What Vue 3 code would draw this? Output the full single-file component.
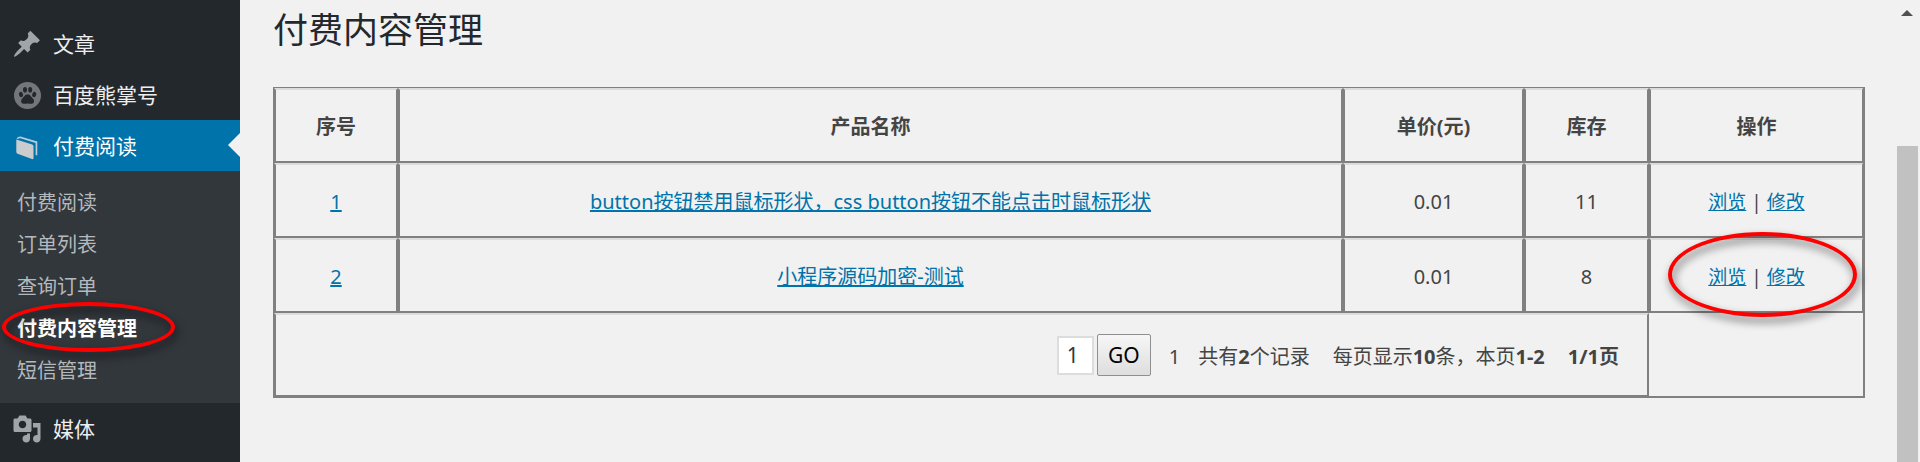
<script setup>
import { ref } from 'vue'

const submenu = ['付费阅读', '订单列表', '查询订单', '付费内容管理', '短信管理']
const currentSub = '付费内容管理'

const products = [
  { id: 1, name: 'button按钮禁用鼠标形状，css button按钮不能点击时鼠标形状', price: '0.01', stock: 11 },
  { id: 2, name: '小程序源码加密-测试', price: '0.01', stock: 8, marked: true },
]

const page = ref('1')
</script>

<template>
  <div class="layout" lang="zh-CN">
    <nav class="sidebar">
      <a class="item" href="#">
        <svg class="icon" viewBox="0 0 20 20"><path d="M10.44 3.02l1.82-1.82 6.36 6.35-1.83 1.82c-1.05-.68-2.48-.57-3.41.36l-.75.75c-.92.93-1.04 2.35-.35 3.41l-1.83 1.82-2.41-2.41-2.8 2.79c-.42.42-3.38 2.71-3.8 2.29s1.86-3.39 2.28-3.81l2.79-2.79L4.1 9.36l1.83-1.82c1.05.69 2.48.57 3.4-.36l.75-.75c.93-.92 1.05-2.35.36-3.41z" /></svg>
        <span>文章</span>
      </a>
      <a class="item" href="#">
        <svg class="icon" viewBox="0 0 30 30">
          <circle cx="15.5" cy="15.5" r="13.5" fill="#74777a" />
          <g fill="#23282d">
            <ellipse cx="9" cy="14.5" rx="2" ry="2.7" transform="rotate(-20 9 14.5)" />
            <ellipse cx="13" cy="9.7" rx="2" ry="2.8" />
            <ellipse cx="18.2" cy="9.7" rx="2" ry="2.8" />
            <ellipse cx="22.2" cy="14.5" rx="2" ry="2.7" transform="rotate(20 22.2 14.5)" />
            <path d="M15.6 14.2c2.4 0 3.2 2.3 4.8 3.8 1.9 1.8 2.1 3.3 1.2 4.7-1.3 1.8-3.7.7-6 .7s-4.7 1.1-6-.7c-.9-1.4-.7-2.9 1.2-4.7 1.6-1.5 2.4-3.8 4.8-3.8z" />
          </g>
        </svg>
        <span>百度熊掌号</span>
      </a>
      <a class="item active" href="#">
        <svg class="icon" viewBox="0 0 30 30">
          <path d="M4.3 8.5L20.2 13.6Q21.5 14 21.5 15.4V27Q21.500 28.6 20 28.1L5.5 22.8Q4.4 22.3 4.3 21Z" fill="#cbcccd" />
          <path d="M4.6 7.8Q5.5 5.5 8.5 5.5L25.3 10.5V24.5L23.6 24V12L8.3 7.2Q6.5 7 5.5 8.2Z" fill="#b9cbd6" />
        </svg>
        <span>付费阅读</span>
      </a>
      <ul class="submenu">
        <li v-for="name in submenu" :key="name">
          <a href="#" :class="{ current: name === currentSub }">{{ name }}</a>
          <i v-if="name === currentSub" class="ring ring-menu"></i>
        </li>
      </ul>
      <a class="item" href="#">
        <svg class="icon" viewBox="0 0 20 20"><path d="M13 11V4c0-.55-.45-1-1-1h-1.67L9 1H5L3.67 3H2c-.55 0-1 .45-1 1v7c0 .55.45 1 1 1h10c.55 0 1-.45 1-1zM7 4.5c1.38 0 2.5 1.12 2.5 2.5S8.38 9.5 7 9.5 4.5 8.38 4.5 7 5.62 4.5 7 4.5zM14 6h5v10.5c0 1.38-1.12 2.5-2.5 2.5S14 17.88 14 16.5s1.12-2.5 2.5-2.5c.17 0 .34.02.5.05V9h-3V6zm-4 8.05V13h2v3.5c0 1.38-1.12 2.5-2.5 2.5S7 17.88 7 16.5 8.12 14 9.5 14c.17 0 .34.02.5.05z" /></svg>
        <span>媒体</span>
      </a>
    </nav>

    <main class="content">
      <h1>付费内容管理</h1>
      <table>
        <colgroup>
          <col class="c-id" />
          <col />
          <col class="c-price" />
          <col class="c-stock" />
          <col class="c-ops" />
        </colgroup>
        <thead>
          <tr>
            <th>序号</th>
            <th>产品名称</th>
            <th>单价(元)</th>
            <th>库存</th>
            <th class="last">操作</th>
          </tr>
        </thead>
        <tbody>
          <tr v-for="p in products" :key="p.id">
            <td><a href="#">{{ p.id }}</a></td>
            <td><a href="#">{{ p.name }}</a></td>
            <td>{{ p.price }}</td>
            <td>{{ p.stock }}</td>
            <td class="ops last">
              <a href="#">浏览</a> | <a href="#">修改</a>
              <i v-if="p.marked" class="ring ring-ops"></i>
            </td>
          </tr>
        </tbody>
        <tfoot>
          <tr>
            <td colspan="4">
              <form class="pager" @submit.prevent>
                <input v-model="page" type="text" aria-label="页码" />
                <button type="submit">GO</button>
                <span class="num">1</span>
                <span class="total">共有<b>2</b>个记录</span>
                <span class="range">每页显示<b>10</b>条，本页<b>1-2</b></span>
                <span><b>1/1页</b></span>
              </form>
            </td>
          </tr>
        </tfoot>
      </table>
    </main>

    <div class="scrollbar">
      <svg class="up" viewBox="0 0 12 6"><path d="M6 0L12 6H0Z" /></svg>
      <div class="thumb"></div>
    </div>
  </div>
</template>

<style>
body {
  margin: 0;
  background: #f1f1f1;
}
</style>

<style scoped>
.layout {
  display: flex;
  height: 100vh;
  overflow: hidden;
  font-family: "Noto Sans", "Noto Sans CJK SC", sans-serif;
  font-size: 20px;
  color: #444;
}

.sidebar {
  flex: none;
  box-sizing: border-box;
  width: 240px;
  padding-top: 18px;
  background: #23282d;
}

.item {
  position: relative;
  display: flex;
  align-items: center;
  gap: 11px;
  height: 51px;
  padding-left: 12px;
  color: #eee;
  font-size: 21px;
  line-height: 28px;
  text-decoration: none;
}

.icon {
  width: 30px;
  height: 30px;
  fill: #a0a5aa;
}

.item.active {
  background: #0073aa;
  color: #fff;
}

.item.active::after {
  content: "";
  position: absolute;
  right: 0;
  top: 13px;
  border: 12px solid transparent;
  border-left-width: 0;
  border-right-color: #f1f1f1;
}

.submenu {
  margin: 0;
  padding: 11px 0;
  list-style: none;
  background: #32373c;
}

.submenu li {
  position: relative;
  padding-left: 17px;
}

.submenu a {
  display: block;
  color: #b4b9be;
  line-height: 42px;
  text-decoration: none;
}

.submenu .current {
  color: #fff;
  font-weight: 700;
}

.ring {
  position: absolute;
  box-sizing: border-box;
  border: 4px solid #f00;
  border-radius: 50%;
  filter: drop-shadow(2px 5px 4px rgba(0, 0, 0, 0.6));
  pointer-events: none;
}

.ring-menu {
  left: 2px;
  top: -6px;
  width: 173px;
  height: 50px;
}

.ring-ops {
  left: 17px;
  top: -8px;
  width: 189px;
  height: 85px;
}

.content {
  flex: 1;
  min-width: 0;
  padding: 8px 32px 0 33px;
}

h1 {
  margin: 0 0 35px;
  color: #23282d;
  font-size: 35px;
  font-weight: 400;
  line-height: 44px;
}

table {
  width: 100%;
  table-layout: fixed;
  border: solid #808080;
  border-width: 1px 2px 2px 1px;
  border-collapse: separate;
  border-spacing: 0;
  line-height: 28px;
  text-align: center;
}

.c-id { width: 124px; }
.c-price { width: 181px; }
.c-stock { width: 125px; }
.c-ops { width: 214px; }

th,
td {
  box-sizing: border-box;
  position: relative;
  height: 75px;
  padding: 2px 0 0;
  border: 2px solid #808080;
  border-top-color: #dcdcdc;
}

.last {
  border-right-width: 1px;
}

.ops {
  font-size: 19px;
}

td a {
  color: #0073aa;
}

tfoot td {
  height: 83px;
  padding: 0;
  border-bottom-width: 1px;
}

.pager {
  display: flex;
  align-items: center;
  justify-content: flex-end;
  padding-right: 28px;
}

.pager input {
  box-sizing: border-box;
  width: 37px;
  height: 39px;
  margin: 0 3px 0 0;
  padding: 0 8px;
  border: 2px solid #ddd;
  background: #fff;
  color: #32373c;
  font: inherit;
  font-size: 21px;
}

.pager button {
  box-sizing: border-box;
  width: 54px;
  height: 42px;
  margin: 0;
  padding: 0;
  border: 1px solid #8f8f8f;
  border-radius: 2px;
  background: linear-gradient(#f6f6f6, #dedede);
  color: #000;
  font: inherit;
  font-size: 21px;
}

.pager span {
  padding-top: 3px;
}

.num {
  margin: 0 18px;
}

.total,
.range {
  margin-right: 23px;
}

.scrollbar {
  flex: none;
  display: flex;
  flex-direction: column;
  align-items: flex-start;
  width: 23px;
}

.up {
  width: 12px;
  height: 6px;
  margin: 10px 0 130px 4px;
  fill: #505050;
}

.thumb {
  flex: 1;
  width: 21px;
  background: #c1c1c1;
}
</style>
